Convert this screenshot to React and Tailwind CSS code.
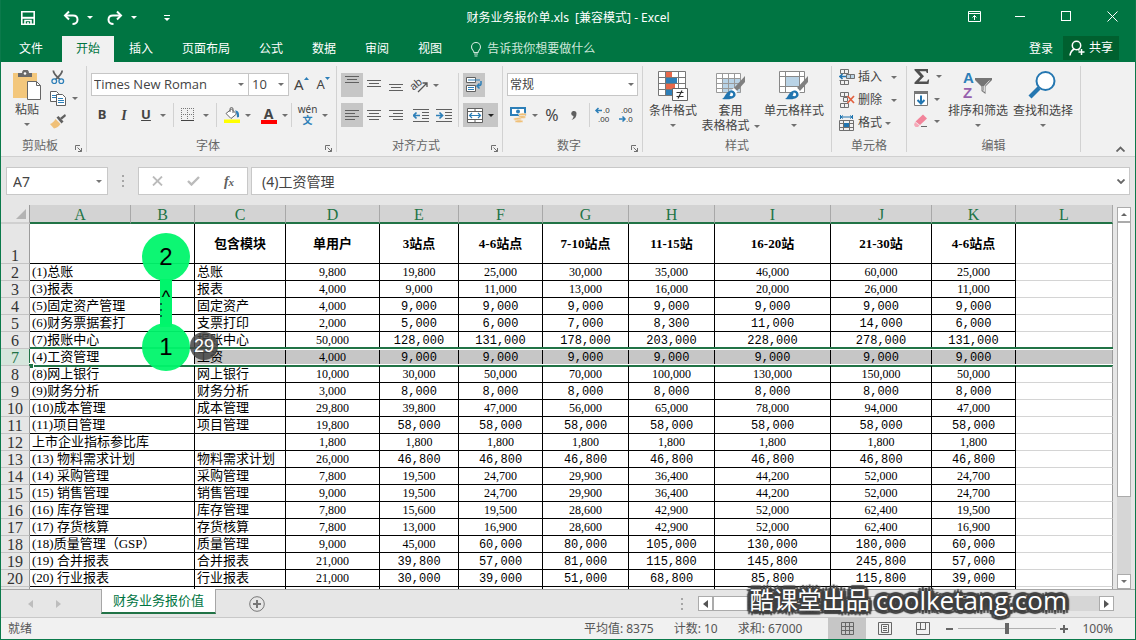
import React, { useState } from 'react';

const Caret = ({ className = 'text-[#707070]' }) => (
  <svg className={`w-[6px] h-[3px] shrink-0 ${className}`} viewBox="0 0 6 3" fill="currentColor">
    <path d="M0 0h6L3 3z" />
  </svg>
);

const Divider = () => <div className="w-px h-6 bg-[#d2d2d2] shrink-0" />;

const SaveIcon = () => (
  <svg className="w-4 h-4" viewBox="0 0 16 16" fill="none" stroke="currentColor" strokeWidth="1.6">
    <path d="M1.8 1.8h12.4v12.4H1.800z" />
    <path d="M2 7.800h12" strokeWidth="2" />
    <path d="M5 14v-3.500h6V14M8 12v2" />
  </svg>
);

const UndoIcon = ({ className = '' }) => (
  <svg className={`w-4 h-4 ${className}`} viewBox="0 0 16 16" fill="none" stroke="currentColor" strokeWidth="2">
    <path d="M6 1.5L2 5.5l4 4" />
    <path d="M2.5 5.5H10c3 0 4.5 2 4.5 4.200S12.800 14 9.500 14" />
  </svg>
);

const BulbIcon = () => (
  <svg className="w-3 h-[15px]" viewBox="0 0 12 15" fill="none" stroke="currentColor" strokeWidth="1.1">
    <path d="M4 10.500C4 8.500 1.500 7.800 1.500 5a4.500 4.500 0 019 0c0 2.800-2.500 3.500-2.500 5.500zM4 12h4M4.500 14h3" />
  </svg>
);

const ShareIcon = () => (
  <svg className="w-4 h-4" viewBox="0 0 16 16" fill="none" stroke="currentColor" strokeWidth="1.5">
    <circle cx="7.500" cy="5.500" r="4.200" />
    <path d="M1 15.500c.5-3.500 2-5.500 4.500-6.500M9 9.300l1.500 1M12.500 9v6M9.500 12h6" />
  </svg>
);

const PasteIcon = () => (
  <svg className="w-7 h-8" viewBox="0 0 28 32">
    <path d="M0 3h24v25H0z" fill="#f3c77c" />
    <path d="M5 7V3h4a3.500 3.500 0 017 0h3v4z" fill="#6a6a6a" />
    <circle cx="12" cy="3.500" r="1.300" fill="#fff" />
    <path d="M14.500 11.500h9l4 4v14h-13z" fill="#fff" stroke="#666" />
    <path d="M23.500 11.500v4h4" fill="none" stroke="#666" />
  </svg>
);

const CutIcon = () => (
  <svg className="w-4 h-[14px]" viewBox="0 0 16 15" fill="none">
    <path d="M3 0.500c0 3 3 6 7 9.500M12.500 0.500c0 3-3 6-7 9.500" stroke="#606060" strokeWidth="1.900" />
    <circle cx="4" cy="12" r="2.500" stroke="#2d7fb8" strokeWidth="1.400" />
    <circle cx="11.500" cy="12" r="2.500" stroke="#2d7fb8" strokeWidth="1.400" />
  </svg>
);

const CopyIcon = () => (
  <svg className="w-4 h-[15px]" viewBox="0 0 16 15" fill="#fff">
    <path d="M.5.500h6l2 2v8h-8z" stroke="#606060" />
    <path d="M2 4.500h4M2 6.500h4" stroke="#2d7fb8" />
    <path d="M6.500 3.500h6l3 3v8h-9z" stroke="#606060" />
    <path d="M8 7.500h5M8 9.500h6M8 11.500h6" stroke="#2d7fb8" />
  </svg>
);

const BrushIcon = () => (
  <svg className="w-4 h-4" viewBox="0 0 16 16">
    <path d="M15 1l1 2-4 3.500-2-1.500z" fill="#606060" />
    <path d="M6.500 4.500l2-1.500 5 5.500-2 2z" fill="#606060" />
    <path d="M5.500 6l5 5c-2 3-4.500 4-6.500 4.500L0 11c2.500-1 4-2.500 5.500-5z" fill="#f0c078" />
  </svg>
);

const BorderIcon = () => (
  <svg className="w-[14px] h-[14px]" viewBox="0 0 14 14" stroke="#777" fill="none">
    <path d="M.5 0v13M6.500 0v13M12.500 0v13M0 .5h13M0 6.500h13" strokeDasharray="1 1" />
    <path d="M0 12.500h13" stroke="#444" />
  </svg>
);

const FillIcon = () => (
  <svg className="w-4 h-4" viewBox="0 0 16 16">
    <path d="M2 6.500L7.500 2l5 5L7 11.500z" fill="#fff" stroke="#666" />
    <path d="M6 5V2a1.500 1.500 0 013 0v4" fill="none" stroke="#666" />
    <path d="M11 3.500c3 0 4.500 2 4 6.500l-2 .5c0-3-.5-4.500-2-7z" fill="#2d7fb8" />
    <path d="M0 12.500h16V16H0z" fill="#ff0" />
  </svg>
);

const GrowMark = ({ down }) => (
  <svg className="w-[5px] h-[3px] mb-3" viewBox="0 0 5 3" fill="#2d7fb8">
    <path d={down ? 'M0 0h5L2.500 3z' : 'M0 3h5L2.500 0z'} />
  </svg>
);

const LINES = {
  middle: 'M0 .5h14M2 3.500h10M0 6.500h14',
  left: 'M0 .5h14M0 3.500h10M0 6.500h14M0 9.500h10',
  center: 'M0 .5h14M2 3.500h10M0 6.500h14M2 9.500h10',
  right: 'M0 .5h14M4 3.500h10M0 6.500h14M4 9.500h10',
};

const LinesIcon = ({ kind, className = '' }) => (
  <svg className={`w-[14px] h-[10px] ${className}`} viewBox="0 0 14 10" stroke="#606060" fill="none">
    <path d={LINES[kind]} />
  </svg>
);

const IndentIcon = ({ increase }) => (
  <svg className="w-4 h-[13px]" viewBox="0 0 16 13" fill="none" stroke="#606060">
    <path d="M0 .5h16M9 3.500h7M9 6.500h7M9 9.500h7M0 12.500h16" />
    <path
      d={increase ? 'M0 6.500h6M3.500 3.500l3 3-3 3' : 'M7 6.500H1M3.500 3.500l-3 3 3 3'}
      stroke="#2d7fb8"
      strokeWidth="1.700"
    />
  </svg>
);

const OrientationIcon = () => (
  <svg className="w-[17px] h-4 overflow-visible" viewBox="0 0 17 16" fill="none" stroke="#555">
    <text x="0" y="11" fontSize="11" fontFamily="Liberation Sans" fill="#444" stroke="none" transform="rotate(-38 5 9)">
      ab
    </text>
    <path d="M7 15l8.500-8.500M11.500 6h4.500v4" strokeWidth="1.300" />
  </svg>
);

const WrapIcon = () => (
  <svg className="w-4 h-4" viewBox="0 0 16 16" fill="none">
    <path d="M.5.500h9v5h-9zM.5 8.500h9v6h-9z" fill="#fff" stroke="#606060" />
    <path d="M2 3h12M2 10.500h6M2 12.500h6" stroke="#2d7fb8" />
    <path d="M15 4v3c0 1.500-1 2-4 2M13.500 6.500L11 9l2.500 2.500" stroke="#2d7fb8" strokeWidth="1.500" />
  </svg>
);

const MergeIcon = () => (
  <svg className="w-4 h-[15px]" viewBox="0 0 16 15" fill="none">
    <path d="M.5.500h15v14H.5z" fill="#fff" stroke="#606060" />
    <path d="M.5 3.500h15M.5 11.500h15M8 0v3.500M8 11.500V15" stroke="#606060" />
    <path d="M2.500 7.500h11M5 5L2.500 7.500 5 10M11 5l2.500 2.500L11 10" stroke="#2d7fb8" strokeWidth="1.200" />
  </svg>
);

const CurrencyIcon = () => (
  <svg className="w-[17px] h-4" viewBox="0 0 17 16">
    <path d="M0 0h16v9H0z" fill="#2d7fb8" />
    <path d="M2 2h12v5H2z" fill="#fff" />
    <circle cx="8" cy="4.500" r="2" fill="#2d7fb8" />
    <ellipse cx="12.500" cy="7.500" rx="4" ry="1.500" fill="#f0c078" stroke="#f1f1f1" strokeWidth=".6" />
    <ellipse cx="12" cy="10" rx="4" ry="1.500" fill="#f0c078" stroke="#f1f1f1" strokeWidth=".6" />
    <ellipse cx="7.500" cy="12" rx="4" ry="1.500" fill="#f0c078" stroke="#f1f1f1" strokeWidth=".6" />
    <ellipse cx="9" cy="14.300" rx="4" ry="1.500" fill="#f0c078" stroke="#f1f1f1" strokeWidth=".6" />
  </svg>
);

const DecimalIcon = ({ increase }) => (
  <svg className="w-4 h-[18px] overflow-visible" viewBox="0 0 16 18" fontSize="8" fontFamily="Liberation Sans" fill="#333">
    <text x={increase ? 8 : 3} y="7">{increase ? '.0' : '.00'}</text>
    <text x={increase ? 3 : 8} y="16">{increase ? '.00' : '.0'}</text>
    <path
      d={increase ? 'M7 4.500H1.500M3.500 2L1 4.500 3.500 7' : 'M1 13h5.500M4.500 10.500L7 13l-2.500 2.500'}
      fill="none"
      stroke="#2d7fb8"
      strokeWidth="1.500"
    />
  </svg>
);

const ConditionalIcon = () => (
  <svg className="w-[30px] h-8" viewBox="0 0 30 32">
    <path d="M.5.500h27v24H.5z" fill="#fff" />
    <path d="M8 1h6v5H8z" fill="#e8684a" />
    <path d="M8 7h11v5H8z" fill="#2d7fb8" />
    <path d="M8 13h9v5H8z" fill="#e8684a" />
    <path d="M8 19h6v5H8z" fill="#2d7fb8" />
    <path d="M.5.500h27v24H.5zM7.500 0v24M20.500 0v24M0 6.500h28M0 12.500h28M0 18.500h28" stroke="#777" fill="none" />
    <path d="M14.500 17.500h15v12h-15z" fill="#fff" stroke="#666" />
    <path d="M18.500 21.500h7M18.500 25.500h7M24 19.500l-4 8" stroke="#333" strokeWidth="1.200" />
  </svg>
);

const StyleBrush = () => (
  <>
    <path d="M29 5v6l-8 9-3-3z" fill="#808080" />
    <path d="M18 17l3.500 3.500-2 2.500-4-4z" fill="#fff" />
    <path d="M15 19.500c3 0 5 2 4.500 5C18 28 12 29 6 28c3.500-1.500 3-7 9-8.500z" fill="#2175b0" />
    <path d="M14.500 21.500c2 0 3 1 2.500 2.800-1 1.200-2.500 1-3.500.2.800-.8 1-1.800 1-3z" fill="#fff" />
  </>
);

const TableStyleIcon = () => (
  <svg className="w-[30px] h-8" viewBox="0 0 30 32">
    <path d="M.5 2.500h24v19H.5z" fill="#fff" />
    <path d="M7 8h18v14H7z" fill="#b9d3e6" />
    <path d="M.5 2.500h24v19H.5zM6.500 2v20M12.500 2v20M18.500 2v20M0 7.500h25M0 12.500h25M0 17.500h25" stroke="#999" fill="none" />
    <StyleBrush />
  </svg>
);

const CellStyleIcon = () => (
  <svg className="w-[30px] h-8" viewBox="0 0 30 32">
    <path d="M.5.500h25v21H.5z" fill="#fff" />
    <path d="M.5.500h25v21H.5zM6.500 0v22M20.500 0v22M0 5.500h26M0 15.500h26" stroke="#888" fill="none" />
    <path d="M7 6h13v9H7z" fill="#b9d3e6" />
    <StyleBrush />
  </svg>
);

const InsertCellsIcon = () => (
  <svg className="w-4 h-4" viewBox="0 0 16 16" fill="none" stroke="#707070">
    <path d="M1.500.500h8v4h-8zM5.500.500v4M1.500 11.500h8v4h-8zM5.500 11.500v4M.5 11.500h9" />
    <path d="M7.500 5.500h8v4h-8zM11.500 5.500v4" fill="#b9d3e6" />
    <path d="M7 7.500H1M3.500 5L1 7.500 3.500 10" stroke="#2175b0" strokeWidth="1.600" />
  </svg>
);

const DeleteCellsIcon = () => (
  <svg className="w-4 h-4" viewBox="0 0 16 16" fill="none" stroke="#707070">
    <path d="M1.500.500h8v4h-8zM5.500.500v4M1.500 11.500h8v4h-8zM5.500 11.500v4M4.500 5.500h4v4h-4z" />
    <path d="M8.500 4l6.500 7M15 4l-6.500 7" stroke="#e2603f" strokeWidth="1.700" />
  </svg>
);

const FormatCellsIcon = () => (
  <svg className="w-4 h-4" viewBox="0 0 16 16" fill="none">
    <path d="M1.500 0v4M13.500 0v4M2 2h11M4 .5L2 2l2 1.500M11 .5L13 2l-2 1.500" stroke="#2175b0" />
    <path d="M.5 5.500h14v10H.5zM4.500 5.500v10M10.500 5.500v10M.5 8.500h14M.5 12.500h14" stroke="#707070" />
    <path d="M5 8h5v4H5z" fill="#2175b0" />
  </svg>
);

const SigmaIcon = () => (
  <svg className="w-4 h-[15px]" viewBox="0 0 16 15">
    <path d="M.5 0H14v4h-1.200L12 2.300H5.500L10 7.300 5 12.500h8l1-2h1.200L14.500 15H.5v-1.500L6.300 7.500.5 1.300z" fill="#505050" />
  </svg>
);

const FillDownIcon = () => (
  <svg className="w-[15px] h-4" viewBox="0 0 15 16" fill="none">
    <path d="M.5.500h13v14H.5z" fill="#fff" stroke="#777" />
    <path d="M0 0h14v3H0z" fill="#777" />
    <path d="M7 4.500v8M3.500 9L7 12.500 10.500 9" stroke="#2175b0" strokeWidth="2" />
  </svg>
);

const EraserIcon = () => (
  <svg className="w-4 h-[14px]" viewBox="0 0 16 14">
    <path d="M9 .5l4 4L6 11 1.500 7.500z" fill="#f2849a" />
    <path d="M1 8l4.500 3.500L4 13H1.500L0 11z" fill="#f6a9b8" />
    <path d="M7 12.500h6" stroke="#666" />
  </svg>
);

const SortIcon = () => (
  <svg className="w-[30px] h-8" viewBox="0 0 30 32">
    <text x="0" y="12" fontSize="15" fontWeight="bold" fontFamily="Liberation Sans" fill="#2d7fb8">A</text>
    <text x="0" y="27" fontSize="15" fontWeight="bold" fontFamily="Liberation Sans" fill="#9660ad">Z</text>
    <path d="M12 7h17v2l-6.500 6.500V23l-4-3v-4.500L12 9z" fill="#757575" />
    <path d="M20 15v4.500l1.500 1V15l5-5.500" fill="none" stroke="#ddd" />
  </svg>
);

const FindIcon = () => (
  <svg className="w-[30px] h-8" viewBox="0 0 30 32" fill="none" stroke="#2577b1">
    <path d="M11 17L2 26" strokeWidth="4.200" />
    <circle cx="17.500" cy="10" r="9" strokeWidth="2" fill="#fff" />
  </svg>
);

const LauncherIcon = () => (
  <svg className="w-[7px] h-[7px]" viewBox="0 0 7 7" fill="none" stroke="#707070">
    <path d="M.5 5V.5H5M2.500 2.500l4 4M6.500 3v3.500H3" />
  </svg>
);

const Group = ({ title, width, launcher, children }) => (
  <section className={`${width} shrink-0 flex flex-col my-1 border-r border-[#d2d2d2]`}>
    <div className="h-[72px] shrink-0">{children}</div>
    <div className="flex items-center h-4 shrink-0 px-1 text-[#666] leading-4">
      <span className="flex-1 text-center">{title}</span>
      {launcher && (
        <button type="button" aria-label={`${title}设置`} className="pt-1">
          <LauncherIcon />
        </button>
      )}
    </div>
  </section>
);

const IconButton = ({ label, width = 'w-[22px]', active, children }) => (
  <button
    type="button"
    aria-label={label}
    className={`${width} h-6 shrink-0 flex items-center justify-center ${active ? 'bg-[#c6c6c6]' : ''}`}
  >
    {children}
  </button>
);

const SplitButton = ({ label, width = 'w-[34px]', active, gap = 'gap-[5px]', children }) => (
  <IconButton label={label} width={width} active={active}>
    <span className={`flex items-center ${gap}`}>
      {children}
      <Caret className={active ? 'text-[#222]' : 'text-[#707070]'} />
    </span>
  </IconButton>
);

const BigButton = ({ icon, lines, width }) => (
  <button type="button" className={`${width} flex flex-col items-center shrink-0`}>
    {icon}
    <span className="leading-4 whitespace-nowrap">{lines[0]}</span>
    {lines[1] ? (
      <span className="leading-[14px] whitespace-nowrap flex items-center gap-1">
        {lines[1]}
        <Caret />
      </span>
    ) : (
      <span className="h-3 flex items-center">
        <Caret />
      </span>
    )}
  </button>
);

const TABS = ['插入', '页面布局', '公式', '数据', '审阅', '视图'];

const TitleBar = () => (
  <header className="bg-[#007542] text-white">
    <div className="flex h-9">
      <div className="w-1/3 flex items-center pl-[19px] pb-px">
        <button type="button" aria-label="保存"><SaveIcon /></button>
        <button type="button" aria-label="撤消" className="flex items-center gap-2 ml-[27px]">
          <UndoIcon />
          <Caret className="text-white" />
        </button>
        <button type="button" aria-label="恢复" className="flex items-center gap-2 ml-[14px]">
          <UndoIcon className="-scale-x-100" />
          <Caret className="text-white" />
        </button>
        <button type="button" aria-label="自定义快速访问工具栏" className="flex flex-col items-center gap-[2px] ml-[27px]">
          <span className="w-[6px] h-px bg-white" />
          <Caret className="text-white" />
        </button>
      </div>
      <h1 className="flex-1 text-center leading-9 whitespace-pre">财务业务报价单.xls  [兼容模式] - Excel</h1>
      <div className="w-1/3 flex items-center justify-end pb-1">
        <button type="button" aria-label="功能区显示选项" className="w-[46px] flex justify-center">
          <svg className="w-[13px] h-[11px]" viewBox="0 0 13 11" fill="none" stroke="currentColor">
            <path d="M.5.500h12v10H.5zM.5 2.500h12M6.500 9V4.500M4.500 6.500l2-2 2 2" />
          </svg>
        </button>
        <button type="button" aria-label="最小化" className="w-[46px] flex justify-center">
          <span className="w-[10px] h-px bg-white" />
        </button>
        <button type="button" aria-label="最大化" className="w-[46px] flex justify-center">
          <span className="w-[10px] h-[10px] border border-white" />
        </button>
        <button type="button" aria-label="关闭" className="w-[46px] flex justify-center">
          <svg className="w-[11px] h-[11px]" viewBox="0 0 11 11" stroke="currentColor">
            <path d="M.5.500l10 10M10.500.500l-10 10" />
          </svg>
        </button>
      </div>
    </div>
    <nav className="flex gap-px h-[26px] pr-4">
      <button type="button" className="px-[18px]">文件</button>
      <button type="button" className="px-[14px] bg-[#f1f1f1] text-[#007542]">开始</button>
      {TABS.map((tab) => (
        <button type="button" key={tab} className="px-[14px]">{tab}</button>
      ))}
      <button type="button" className="flex items-center gap-[5px] pl-[13px] text-[#cfe8dc]">
        <BulbIcon />
        告诉我你想要做什么
      </button>
      <button type="button" className="ml-auto mr-[9px]">登录</button>
      <button type="button" className="h-6 px-[6px] flex items-center gap-1 bg-[#00602f]">
        <ShareIcon />
        共享
      </button>
    </nav>
  </header>
);

const Ribbon = () => (
  <div className="flex h-[95px] bg-[#f1f1f1] border-b border-[#d0d0d0] text-[#444]">
    <Group title="剪贴板" width="w-[86px]" launcher>
      <div className="flex pt-1 pl-[12px]">
        <BigButton icon={<PasteIcon />} lines={['粘贴']} width="w-7" />
        <div className="flex flex-col gap-[7px] pl-[9px]">
          <button type="button" aria-label="剪切"><CutIcon /></button>
          <button type="button" aria-label="复制" className="flex items-center gap-[6px]">
            <CopyIcon />
            <Caret />
          </button>
          <button type="button" aria-label="格式刷"><BrushIcon /></button>
        </div>
      </div>
    </Group>

    <Group title="字体" width="w-[250px]" launcher>
      <div className="flex flex-col gap-[7px] pt-[7px] pl-1">
        <div className="flex items-center h-[23px]">
          <div className="flex items-center w-[158px] h-full bg-white border border-[#c6c6c6] pr-1">
            <input
              aria-label="字体"
              defaultValue="Times New Roman"
              className="flex-1 min-w-0 pl-[2px] text-[13px] outline-none [font-family:'Open_Sans',sans-serif]"
            />
            <Caret />
          </div>
          <div className="flex items-center w-[40px] h-full bg-white border border-l-0 border-[#c6c6c6] pr-1">
            <input
              aria-label="字号"
              defaultValue="10"
              className="flex-1 min-w-0 pl-[3px] text-[13px] outline-none [font-family:'Open_Sans',sans-serif]"
            />
            <Caret />
          </div>
          <button type="button" aria-label="增大字号" className="flex items-center ml-[5px] text-[15px]">
            A<GrowMark />
          </button>
          <button type="button" aria-label="减小字号" className="flex items-center ml-2 text-[13px]">
            A<GrowMark down />
          </button>
        </div>
        <div className="flex items-center">
          <IconButton label="加粗"><b className="text-[13px]">B</b></IconButton>
          <IconButton label="倾斜">
            <i className="text-[14px] [font-family:'Liberation_Serif',serif] font-bold">I</i>
          </IconButton>
          <IconButton label="下划线"><b className="text-[13px] underline">U</b></IconButton>
          <IconButton label="下划线样式" width="w-3"><Caret /></IconButton>
          <div className="pl-1"><Divider /></div>
          <SplitButton label="边框" width="w-[42px]" gap="gap-2"><BorderIcon /></SplitButton>
          <Divider />
          <SplitButton label="填充颜色" width="w-[40px]"><FillIcon /></SplitButton>
          <SplitButton label="字体颜色">
            <span className="w-4 border-b-4 border-[#f00] text-[14px] font-bold leading-[13px]">A</span>
          </SplitButton>
          <Divider />
          <SplitButton label="拼音指南" width="w-[42px]">
            <span className="flex flex-col items-center text-[10px] leading-[11px]">
              <span>wén</span>
              <b className="text-[#2d7fb8]">文</b>
            </span>
          </SplitButton>
        </div>
      </div>
    </Group>

    <Group title="对齐方式" width="w-[166px]" launcher>
      <div className="flex pt-[7px] pl-1">
        <div className="flex flex-col gap-[6px] w-[117px]">
          <div className="flex">
            <IconButton label="顶端对齐" active><LinesIcon kind="middle" className="mb-2" /></IconButton>
            <IconButton label="垂直居中"><LinesIcon kind="middle" /></IconButton>
            <IconButton label="底端对齐"><LinesIcon kind="middle" className="mt-2" /></IconButton>
            <SplitButton label="方向" width="w-[36px]"><OrientationIcon /></SplitButton>
          </div>
          <div className="flex">
            <IconButton label="左对齐" active><LinesIcon kind="left" /></IconButton>
            <IconButton label="居中"><LinesIcon kind="center" /></IconButton>
            <IconButton label="右对齐"><LinesIcon kind="right" /></IconButton>
            <IconButton label="减少缩进量" width="w-[28px]"><IndentIcon /></IconButton>
            <IconButton label="增加缩进量" width="w-[18px]"><IndentIcon increase /></IconButton>
          </div>
        </div>
        <div className="flex flex-col gap-[6px] border-l border-[#d2d2d2] pl-1">
          <IconButton label="自动换行" active><WrapIcon /></IconButton>
          <SplitButton label="合并后居中" width="w-[35px]" active><MergeIcon /></SplitButton>
        </div>
      </div>
    </Group>

    <Group title="数字" width="w-[140px]" launcher>
      <div className="flex flex-col gap-[7px] pt-[7px] pl-1">
        <div className="relative w-[131px]">
          <select
            aria-label="数字格式"
            className="appearance-none w-full h-[23px] pl-[2px] bg-white border border-[#c6c6c6] outline-none"
          >
            <option>常规</option>
          </select>
          <Caret className="absolute right-1 top-[10px] text-[#707070] pointer-events-none" />
        </div>
        <div className="flex items-center">
          <SplitButton label="会计数字格式" width="w-[34px]"><CurrencyIcon /></SplitButton>
          <IconButton label="百分比样式"><span className="text-[16px]">%</span></IconButton>
          <IconButton label="千位分隔样式">
            <svg className="w-[6px] h-[9px]" viewBox="0 0 6 9" fill="#606060">
              <path d="M3 0a2.500 2.500 0 012.500 2.500C5.500 6 4 8 .5 9c1.500-1.500 2-2.500 2-4A2.500 2.500 0 013 0z" />
            </svg>
          </IconButton>
          <div className="pl-1"><Divider /></div>
          <IconButton label="增加小数位数" width="w-[26px]"><DecimalIcon increase /></IconButton>
          <IconButton label="减少小数位数" width="w-[20px]"><DecimalIcon /></IconButton>
        </div>
      </div>
    </Group>

    <Group title="样式" width="w-[189px]">
      <div className="flex pt-[5px] pl-[6px]">
        <BigButton icon={<ConditionalIcon />} lines={['条件格式']} width="w-[48px]" />
        <BigButton icon={<TableStyleIcon />} lines={['套用', '表格格式']} width="w-[67px]" />
        <BigButton icon={<CellStyleIcon />} lines={['单元格样式']} width="w-[60px]" />
      </div>
    </Group>

    <Group title="单元格" width="w-[75px]">
      <div className="flex flex-col gap-[7px] pt-[3px] pl-[7px]">
        <button type="button" className="flex items-center gap-[3px] leading-4">
          <InsertCellsIcon />插入<span className="pl-[6px]"><Caret /></span>
        </button>
        <button type="button" className="flex items-center gap-[3px] leading-4">
          <DeleteCellsIcon />删除<span className="pl-[6px]"><Caret /></span>
        </button>
        <button type="button" className="flex items-center gap-[3px] leading-4">
          <FormatCellsIcon />格式<Caret />
        </button>
      </div>
    </Group>

    <Group title="编辑" width="w-[174px]">
      <div className="flex pl-[7px]">
        <div className="flex flex-col gap-[7px] pt-[3px]">
          <button type="button" aria-label="自动求和" className="flex items-center gap-[6px]">
            <SigmaIcon />
            <Caret />
          </button>
          <button type="button" aria-label="填充" className="flex items-center gap-[5px]">
            <FillDownIcon />
            <Caret />
          </button>
          <button type="button" aria-label="清除" className="flex items-center gap-1">
            <EraserIcon />
            <Caret />
          </button>
        </div>
        <div className="flex gap-[5px] pt-[5px] pl-[6px]">
          <BigButton icon={<SortIcon />} lines={['排序和筛选']} width="w-[60px]" />
          <BigButton icon={<FindIcon />} lines={['查找和选择']} width="w-[60px]" />
        </div>
      </div>
    </Group>

    <button type="button" aria-label="折叠功能区" className="self-end ml-auto mr-[10px] mb-1">
      <svg className="w-[9px] h-[6px]" viewBox="0 0 9 6" fill="none" stroke="#666" strokeWidth="1.800">
        <path d="M.5 5.500l4-4 4 4" />
      </svg>
    </button>
  </div>
);

const GripDots = () => (
  <svg className="w-[2px] h-[12px] shrink-0" viewBox="0 0 2 12" fill="#a6a6a6">
    <path d="M0 0h2v2H0zM0 5h2v2H0zM0 10h2v2H0z" />
  </svg>
);

const FormulaBar = () => {
  const [formula, setFormula] = useState('(4)工资管理');

  return (
    <div className="flex items-center px-[5px] py-[10px] bg-[#e6e6e6] text-[#444]">
      <div className="flex items-center w-[102px] h-7 bg-white border border-[#c8c8c8] pr-[5px]">
        <input aria-label="名称框" defaultValue="A7" className="flex-1 min-w-0 pl-[6px] text-[14px] outline-none" />
        <Caret className="text-[#777]" />
      </div>
      <div className="w-[30px] flex justify-center"><GripDots /></div>
      <div className="flex items-center w-[110px] h-7 bg-white border border-[#c8c8c8]">
        <button type="button" aria-label="取消" className="w-9 flex justify-center">
          <svg className="w-[11px] h-[10px]" viewBox="0 0 11 10" stroke="#bbb" strokeWidth="1.800">
            <path d="M1 .5l9 9M10 .5l-9 9" />
          </svg>
        </button>
        <button type="button" aria-label="输入" className="w-9 flex justify-center">
          <svg className="w-[13px] h-[10px]" viewBox="0 0 13 10" fill="none" stroke="#bbb" strokeWidth="2.400">
            <path d="M1 5l3.500 3.500L12 1" />
          </svg>
        </button>
        <button
          type="button"
          aria-label="插入函数"
          className="w-9 text-center italic font-bold text-[14px] text-[#606060] [font-family:'Liberation_Serif',serif]"
        >
          f<span className="text-[11px]">x</span>
        </button>
      </div>
      <div className="flex flex-1 items-center h-7 ml-[3px] bg-white border border-[#c8c8c8] pr-1">
        <input
          aria-label="编辑栏"
          value={formula}
          onChange={(e) => setFormula(e.target.value)}
          className="flex-1 min-w-0 pl-[10px] text-[14px] outline-none"
        />
        <svg className="w-2 h-[5px]" viewBox="0 0 8 5" fill="none" stroke="#666" strokeWidth="1.800">
          <path d="M.5.500L4 4 7.500.500" />
        </svg>
      </div>
    </div>
  );
};

const COLUMNS = [
  ['A', 'w-[101px]'],
  ['B', 'w-[64px]'],
  ['C', 'w-[91px]'],
  ['D', 'w-[94px]'],
  ['E', 'w-[79px]'],
  ['F', 'w-[84px]'],
  ['G', 'w-[86px]'],
  ['H', 'w-[86px]'],
  ['I', 'w-[116px]'],
  ['J', 'w-[101px]'],
  ['K', 'w-[84px]'],
  ['L', ''],
];

const HEADINGS = ['包含模块', '单用户', '3站点', '4-6站点', '7-10站点', '11-15站', '16-20站', '21-30站', '4-6站点'];

// mono: index of the first value column set in the monospaced face
const ROWS = [
  { label: '(1)总账', module: '总账', values: '9,800 19,800 25,000 30,000 35,000 46,000 60,000 25,000' },
  { label: '(3)报表', module: '报表', values: '4,000 9,000 11,000 13,000 16,000 20,000 26,000 11,000' },
  { label: '(5)固定资产管理', module: '固定资产', values: '4,000 9,000 9,000 9,000 9,000 9,000 9,000 9,000', mono: 1 },
  { label: '(6)财务票据套打', module: '支票打印', values: '2,000 5,000 6,000 7,000 8,300 11,000 14,000 6,000', mono: 1 },
  { label: '(7)报账中心', module: '报账中心', values: '50,000 128,000 131,000 178,000 203,000 228,000 278,000 131,000', mono: 1 },
  { label: '(4)工资管理', module: '工资', values: '4,000 9,000 9,000 9,000 9,000 9,000 9,000 9,000', mono: 1, selected: true },
  { label: '(8)网上银行', module: '网上银行', values: '10,000 30,000 50,000 70,000 100,000 130,000 150,000 50,000' },
  { label: '(9)财务分析', module: '财务分析', values: '3,000 8,000 8,000 8,000 8,000 8,000 8,000 8,000', mono: 1 },
  { label: '(10)成本管理', module: '成本管理', values: '29,800 39,800 47,000 56,000 65,000 78,000 94,000 47,000' },
  { label: '(11)项目管理', module: '项目管理', values: '19,800 58,000 58,000 58,000 58,000 58,000 58,000 58,000', mono: 1 },
  { label: '上市企业指标参比库', module: '', values: '1,800 1,800 1,800 1,800 1,800 1,800 1,800 1,800' },
  { label: '(13) 物料需求计划', module: '物料需求计划', values: '26,000 46,800 46,800 46,800 46,800 46,800 46,800 46,800', mono: 1 },
  { label: '(14) 采购管理', module: '采购管理', values: '7,800 19,500 24,700 29,900 36,400 44,200 52,000 24,700' },
  { label: '(15) 销售管理', module: '销售管理', values: '9,000 19,500 24,700 29,900 36,400 44,200 52,000 24,700' },
  { label: '(16) 库存管理', module: '库存管理', values: '7,800 15,600 19,500 28,600 42,900 52,000 62,400 19,500' },
  { label: '(17) 存货核算', module: '存货核算', values: '7,800 13,000 16,900 28,600 42,900 52,000 62,400 16,900' },
  { label: '(18)质量管理（GSP）', module: '质量管理', values: '9,000 45,000 60,000 80,000 105,000 130,000 180,000 60,000', mono: 2 },
  { label: '(19) 合并报表', module: '合并报表', values: '21,000 39,800 57,000 81,000 115,800 145,800 245,800 57,000', mono: 1 },
  { label: '(20) 行业报表', module: '行业报表', values: '21,000 30,000 39,000 51,000 68,800 85,800 115,800 39,000', mono: 1 },
];

const RowHeader = ({ children, selected }) => (
  <th
    scope="row"
    className={`p-0 align-bottom font-normal text-[16px] leading-[14px] border-r border-b ${
      selected
        ? 'bg-[#d6e6dd] text-[#217346] border-r-[#217346] border-b-[#c4c4c4]'
        : 'bg-[#e6e6e6] text-[#333] border-r-[#9c9c9c] border-b-[#c4c4c4]'
    }`}
  >
    {children}
  </th>
);

const DataRow = ({ row, number }) => (
  <tr className="relative h-[17px]">
    <RowHeader selected={row.selected}>{number}</RowHeader>
    <td colSpan={2} className="p-0 pl-[2px] text-[13px] border-r border-b border-black">{row.label}</td>
    <td className={`p-0 pl-[2px] text-[13px] border-r border-b border-black ${row.selected ? 'bg-[#c6c6c6]' : ''}`}>
      {row.module}
    </td>
    {row.values.split(' ').map((value, i) => (
      <td
        key={i}
        className={`p-0 text-center text-[12px] border-r border-b border-black ${row.selected ? 'bg-[#c6c6c6]' : ''} ${
          i >= (row.mono ?? 99) ? "align-bottom leading-[14px] [font-family:'Liberation_Mono',monospace]" : ''
        }`}
      >
        {value}
      </td>
    ))}
    <td className={`p-0 border-r border-b border-r-[#9c9c9c] border-b-[#d4d4d4] ${row.selected ? 'bg-[#c6c6c6]' : ''}`}>
      {row.selected && (
        <div className="absolute left-[29px] right-0 -top-[2px] -bottom-px border-y-2 border-[#217346] pointer-events-none">
          <div className="h-full border-y border-white" />
          <span className="absolute -left-px -bottom-[3px] w-[5px] h-[5px] bg-[#217346] border-t border-r border-white" />
        </div>
      )}
    </td>
  </tr>
);

const StepMarkers = () => (
  <div className="[font-family:'Liberation_Sans',sans-serif]">
    <div className="absolute left-[189px] top-[127px] w-7 h-7 rounded-full bg-[#444]/85 text-white text-[18px] leading-7 text-center">
      29
    </div>
    <div className="absolute left-[159px] top-[74px] w-3 h-[48px] bg-[#00f56c] text-black text-[18px] leading-4 text-center pt-[10px]">
      ^
      <svg className="absolute left-0 top-6 w-[2px] h-[14px]" viewBox="0 0 2 14" fill="#064">
        <path d="M0 0h2v2H0zM0 6h2v2H0zM0 12h2v2H0z" />
      </svg>
    </div>
    <div className="absolute left-[141px] top-[28px] w-12 h-12 rounded-full bg-[#00f56c]/95 text-black text-[24px] leading-[48px] text-center">
      2
    </div>
    <div className="absolute left-[141px] top-[118px] w-12 h-12 rounded-full bg-[#00f56c]/95 text-black text-[24px] leading-[48px] text-center">
      1
    </div>
  </div>
);

const Sheet = () => (
  <div className="flex flex-1 min-h-0 bg-[#e6e6e6]">
    <div className="relative flex-1 min-w-0 overflow-hidden">
      <table className="table-fixed w-full border-separate border-spacing-0 bg-white text-black leading-4 whitespace-nowrap [font-family:'Liberation_Serif','Noto_Sans_CJK_SC',serif]">
        <colgroup>
          <col className="w-[29px]" />
          {COLUMNS.map(([name, width]) => (
            <col key={name} className={width} />
          ))}
        </colgroup>
        <thead>
          <tr className="h-[19px]">
            <td className="p-0 bg-[#e6e6e6] border-r border-b-2 border-r-[#9c9c9c] border-b-[#d0d0d0]">
              <svg className="w-[10px] h-[10px] ml-auto mr-[3px]" viewBox="0 0 10 10" fill="#b4b4b4">
                <path d="M10 0v10H0z" />
              </svg>
            </td>
            {COLUMNS.map(([name]) => (
              <th
                key={name}
                scope="col"
                className="p-0 align-bottom font-normal text-[16px] leading-[14px] text-[#217346] bg-[#d3d3d3] border-r border-b-2 border-r-[#a8a8a8] border-b-[#217346]"
              >
                {name}
              </th>
            ))}
          </tr>
        </thead>
        <tbody>
          <tr className="h-[40px]">
            <RowHeader>1</RowHeader>
            <td colSpan={2} className="border-r border-b border-black" />
            {HEADINGS.map((heading, i) => (
              <td key={i} className="p-0 text-center text-[13px] font-bold border-r border-b border-black">
                {heading}
              </td>
            ))}
            <td className="border-r border-b border-r-[#9c9c9c] border-b-[#d4d4d4]" />
          </tr>
          {ROWS.map((row, i) => (
            <DataRow key={row.label} row={row} number={i + 2} />
          ))}
          <tr className="h-[17px]">
            <RowHeader />
            <td colSpan={2} className="border-r border-black" />
            {HEADINGS.map((_, i) => (
              <td key={i} className="border-r border-black" />
            ))}
            <td className="border-r border-[#9c9c9c]" />
          </tr>
        </tbody>
      </table>
      <StepMarkers />
    </div>
    <div className="w-[22px] flex flex-col pt-[2px] pl-1 pr-1">
      <div className="h-[15px] flex items-center justify-center bg-white border border-[#ababab]">
        <Caret className="rotate-180 text-[#666]" />
      </div>
      <div className="flex-1 bg-[#d6d6d6]">
        <div className="h-[78%] bg-white border border-[#ababab]" />
      </div>
      <div className="h-[15px] flex items-center justify-center bg-white border border-[#ababab]">
        <Caret />
      </div>
    </div>
  </div>
);

const SideArrow = ({ right, className = '' }) => (
  <svg className={`w-[5px] h-2 ${className}`} viewBox="0 0 5 8" fill="currentColor">
    <path d={right ? 'M0 0v8l5-4z' : 'M5 0v8L0 4z'} />
  </svg>
);

const SheetTabs = () => (
  <div className="relative flex h-7 bg-[#e6e6e6] border-t border-[#a6a6a6]">
    <button type="button" aria-label="上一个工作表" className="pl-[27px] text-[#bdbdbd]"><SideArrow /></button>
    <button type="button" aria-label="下一个工作表" className="pl-[23px] text-[#bdbdbd]"><SideArrow right /></button>
    <button
      type="button"
      className="h-[25px] -mt-px ml-10 px-[11px] bg-white border-x border-x-[#a6a6a6] border-b-2 border-b-[#217346] text-[#007542] text-[13px]"
    >
      财务业务报价值
    </button>
    <button type="button" aria-label="新工作表" className="ml-[33px]">
      <svg className="w-4 h-4" viewBox="0 0 16 16" fill="none" stroke="#777">
        <circle cx="8" cy="8" r="7.300" />
        <path d="M8 4v8M4 8h8" strokeWidth="2" />
      </svg>
    </button>
    <div className="ml-auto flex items-center w-[454px]">
      <GripDots />
      <div className="flex flex-1 h-[15px] ml-[15px] mr-[21px] bg-[#d6d6d6]">
        <div className="w-[15px] flex items-center justify-center bg-white border border-[#ababab] text-[#555]">
          <SideArrow />
        </div>
        <div className="w-[320px] bg-white border border-[#ababab]" />
        <div className="ml-auto w-[15px] flex items-center justify-center bg-white border border-[#ababab] text-[#555]">
          <SideArrow right />
        </div>
      </div>
    </div>
    <p className="absolute right-[68px] -top-2 flex items-center gap-[6px] leading-9 text-white whitespace-nowrap [text-shadow:4px_0_1px_#404040,-4px_0_1px_#404040,0_4px_1px_#404040,0_-4px_1px_#404040,3px_3px_1px_#404040,-3px_3px_1px_#404040,3px_-3px_1px_#404040,-3px_-3px_1px_#404040,2px_0_1px_#404040,-2px_0_1px_#404040,0_2px_1px_#404040,0_-2px_1px_#404040]">
      <span className="text-[24px]">酷课堂出品</span>
      <span className="text-[26px] [font-family:'Open_Sans',sans-serif]">coolketang.com</span>
    </p>
  </div>
);

const StatusBar = () => {
  const [zoom, setZoom] = useState(100);

  return (
    <footer className="flex items-center h-[22px] bg-[#f1f1f1] border-t border-[#c8c8c8] text-[#555]">
      <span className="pl-[7px]">就绪</span>
      <div className="ml-auto flex gap-5 pr-[26px]">
        <span>平均值: 8375</span>
        <span>计数: 10</span>
        <span>求和: 67000</span>
      </div>
      <IconButton label="普通" width="w-[38px]" active>
        <svg className="w-[13px] h-[13px]" viewBox="0 0 13 13" fill="none" stroke="#666">
          <path d="M.5.500h12v12H.5zM4.500 0v13M8.500 0v13M0 4.500h13M0 8.500h13" />
        </svg>
      </IconButton>
      <IconButton label="页面布局" width="w-[38px]">
        <svg className="w-[14px] h-[13px]" viewBox="0 0 14 13" fill="none" stroke="#666">
          <path d="M.5.500h13v12H.5zM3.500 2.500h7v8h-7zM5 4.500h4M5 6.500h4M5 8.500h4" />
        </svg>
      </IconButton>
      <IconButton label="分页预览" width="w-[38px]">
        <svg className="w-[14px] h-[13px]" viewBox="0 0 14 13" fill="none" stroke="#666">
          <path d="M.5.500h13v12H.5zM4.500.500v7M9.500.500v7M.5 7.500h9" />
        </svg>
      </IconButton>
      <div className="flex items-center gap-1 pl-1">
        <button type="button" aria-label="缩小" onClick={() => setZoom(Math.max(10, zoom - 10))} className="w-[8px]">
          <span className="block w-[7px] h-[2px] bg-[#666]" />
        </button>
        <input
          type="range"
          aria-label="显示比例"
          min="10"
          max="190"
          value={zoom}
          onChange={(e) => setZoom(Number(e.target.value))}
          className="appearance-none w-[98px] h-px bg-[#b0b0b0] [&::-webkit-slider-thumb]:appearance-none [&::-webkit-slider-thumb]:w-1 [&::-webkit-slider-thumb]:h-[11px] [&::-webkit-slider-thumb]:bg-[#666]"
        />
        <button type="button" aria-label="放大" onClick={() => setZoom(Math.min(190, zoom + 10))}>
          <svg className="w-2 h-2" viewBox="0 0 8 8" fill="#666">
            <path d="M3 0h2v3h3v2H5v3H3V5H0V3h3z" />
          </svg>
        </button>
      </div>
      <span className="pl-[14px] pr-[22px]">{zoom}%</span>
    </footer>
  );
};

const App = () => (
  <div className="flex flex-col h-screen overflow-hidden border border-t-0 border-[#0b7a4b] bg-[#e6e6e6] text-[12px] [font-family:'Noto_Sans','Noto_Sans_CJK_SC',sans-serif]">
    <TitleBar />
    <Ribbon />
    <FormulaBar />
    <Sheet />
    <SheetTabs />
    <StatusBar />
  </div>
);

export default App;
